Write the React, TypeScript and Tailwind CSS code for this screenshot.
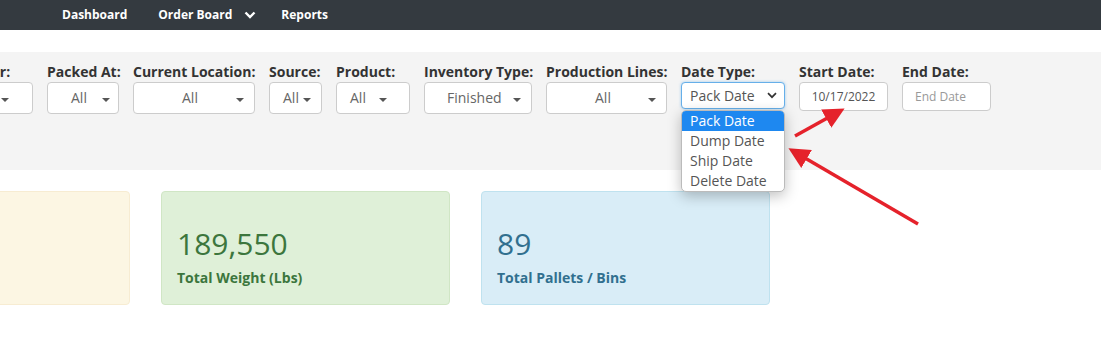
import React from 'react';

const font = { fontFamily: '"Open Sans", "Noto Sans", sans-serif' };

type Filter = {
  label: string;
  width: number;
  text: string;
  textLeft: number;
  caretLeft: number;
};

const filters: Filter[] = [
  { label: 'Packed At:', width: 72, text: 'All', textLeft: 23, caretLeft: 54 },
  { label: 'Current Location:', width: 122, text: 'All', textLeft: 48, caretLeft: 102 },
  { label: 'Source:', width: 53, text: 'All', textLeft: 13, caretLeft: 33 },
  { label: 'Product:', width: 74, text: 'All', textLeft: 13, caretLeft: 42 },
  { label: 'Inventory Type:', width: 108, text: 'Finished', textLeft: 22, caretLeft: 88 },
  { label: 'Production Lines:', width: 121, text: 'All', textLeft: 48, caretLeft: 101 },
];

function Caret({ left }: { left: number }) {
  return (
    <span
      className="absolute top-[15px] w-0 h-0 border-l-[4px] border-r-[4px] border-t-[4px] border-l-transparent border-r-transparent border-t-[#555]"
      style={{ left }}
    />
  );
}

const labelCls = 'text-[14px] font-bold text-[#333] leading-[18px] whitespace-nowrap mb-[1px]';

function FilterBox({ f }: { f: Filter }) {
  return (
    <div className="flex flex-col shrink-0" style={{ width: f.width }}>
      <label className={labelCls}>{f.label}</label>
      <div className="relative h-[32px] w-full bg-white border border-[#ccc] rounded-[4px] text-[14px] text-[#666]">
        <span className="absolute top-[5px] leading-[20px]" style={{ left: f.textLeft }}>{f.text}</span>
        <Caret left={f.caretLeft} />
      </div>
    </div>
  );
}

function StatCard({ value, label, bg, border, color, left }: { value: string; label: string; bg: string; border: string; color: string; left?: boolean }) {
  return (
    <div className={`w-[289px] h-[114px] shrink-0 rounded-[4px] border ${bg} ${border} ${color} ${left ? 'ml-[-159px]' : ''} pl-[15px] pt-[32px]`}>
      <div className="text-[30px] leading-[40px]">{value}</div>
      <div className="text-[14px] font-bold mt-[5px] leading-[18px]">{label}</div>
    </div>
  );
}

export default function App() {
  return (
    <div className="relative w-[1101px] h-[363px] bg-white overflow-hidden" style={font}>
      <nav className="h-[30px] bg-[#343a40] flex items-center pl-[62px] text-white text-[12px] font-bold">
        <span>Dashboard</span>
        <span className="ml-[31px]">Order Board</span>
        <svg className="ml-[12px]" width="12" height="8" viewBox="0 0 12 8">
          <path d="M1.5 1.5 L6 6 L10.5 1.5" fill="none" stroke="white" strokeWidth="2.4" />
        </svg>
        <span className="ml-[25px]">Reports</span>
      </nav>

      <div className="mt-[22px] h-[118px] bg-[#f4f4f4] pt-[11px]">
        <div className="flex gap-[14px] ml-[-62px]">
          <div className="flex flex-col shrink-0 w-[95px]">
            <label className={labelCls}>Customer:</label>
            <div className="relative h-[32px] w-full bg-white border border-[#ccc] rounded-[4px]">
              <Caret left={62} />
            </div>
          </div>
          {filters.map((f) => (
            <FilterBox key={f.label} f={f} />
          ))}

          <div className="flex flex-col shrink-0 relative w-[104px]">
            <label className={labelCls}>Date Type:</label>
            <div className="relative h-[27px] w-full bg-white border border-[#66afe9] rounded-[4px] shadow-[0_0_3px_rgba(102,175,233,0.6)] text-[14px] text-[#555] flex items-center pl-[8px]">
              Pack Date
              <svg className="absolute right-[7px] top-[9px]" width="10" height="7" viewBox="0 0 10 7">
                <path d="M1 1.2 L5 5.2 L9 1.2" fill="none" stroke="#333" strokeWidth="1.7" />
              </svg>
            </div>
            <ul className="absolute top-[47px] left-0 w-[104px] bg-white border border-[#bbb] rounded-[5px] shadow-[0_4px_14px_rgba(0,0,0,0.25)] text-[14px] text-[#555] overflow-hidden z-10">
              <li className="h-[20px] leading-[20px] pl-[8px] bg-[#1e88f0] text-white">Pack Date</li>
              <li className="h-[20px] leading-[20px] pl-[8px]">Dump Date</li>
              <li className="h-[20px] leading-[20px] pl-[8px]">Ship Date</li>
              <li className="h-[20px] leading-[20px] pl-[8px]">Delete Date</li>
            </ul>
          </div>

          <div className="flex flex-col shrink-0 w-[89px]">
            <label className={labelCls}>Start Date:</label>
            <div className="h-[29px] w-full bg-white border border-[#ccc] rounded-[4px] text-[12px] text-[#555] flex items-center justify-center">
              10/17/2022
            </div>
          </div>

          <div className="flex flex-col shrink-0 w-[89px]">
            <label className={labelCls}>End Date:</label>
            <div className="h-[29px] w-full bg-white border border-[#ccc] rounded-[4px] text-[12px] text-[#999] flex items-center pl-[12px]">
              End Date
            </div>
          </div>
        </div>
      </div>

      <div className="flex gap-[31px] mt-[21px]">
        <StatCard value="" label="" bg="bg-[#fcf6e3]" border="border-[#f7ecd2]" color="text-[#8a6d3b]" left />
        <StatCard value="189,550" label="Total Weight (Lbs)" bg="bg-[#dff0d8]" border="border-[#d0e6c5]" color="text-[#3c763d]" />
        <StatCard value="89" label="Total Pallets / Bins" bg="bg-[#d9edf7]" border="border-[#bfe2ef]" color="text-[#31708f]" />
      </div>

      <svg className="absolute inset-0 pointer-events-none" width="1101" height="363">
        <defs>
          <marker id="ah" markerWidth="6" markerHeight="6" refX="4.5" refY="3" orient="auto" markerUnits="strokeWidth">
            <path d="M0 0 L6 3 L0 6 Z" fill="#e5222b" />
          </marker>
        </defs>
        <line x1="795" y1="136" x2="840" y2="111" stroke="#e5222b" strokeWidth="3.5" markerEnd="url(#ah)" />
        <line x1="918" y1="224" x2="793" y2="151" stroke="#e5222b" strokeWidth="3.5" markerEnd="url(#ah)" />
      </svg>
    </div>
  );
}
